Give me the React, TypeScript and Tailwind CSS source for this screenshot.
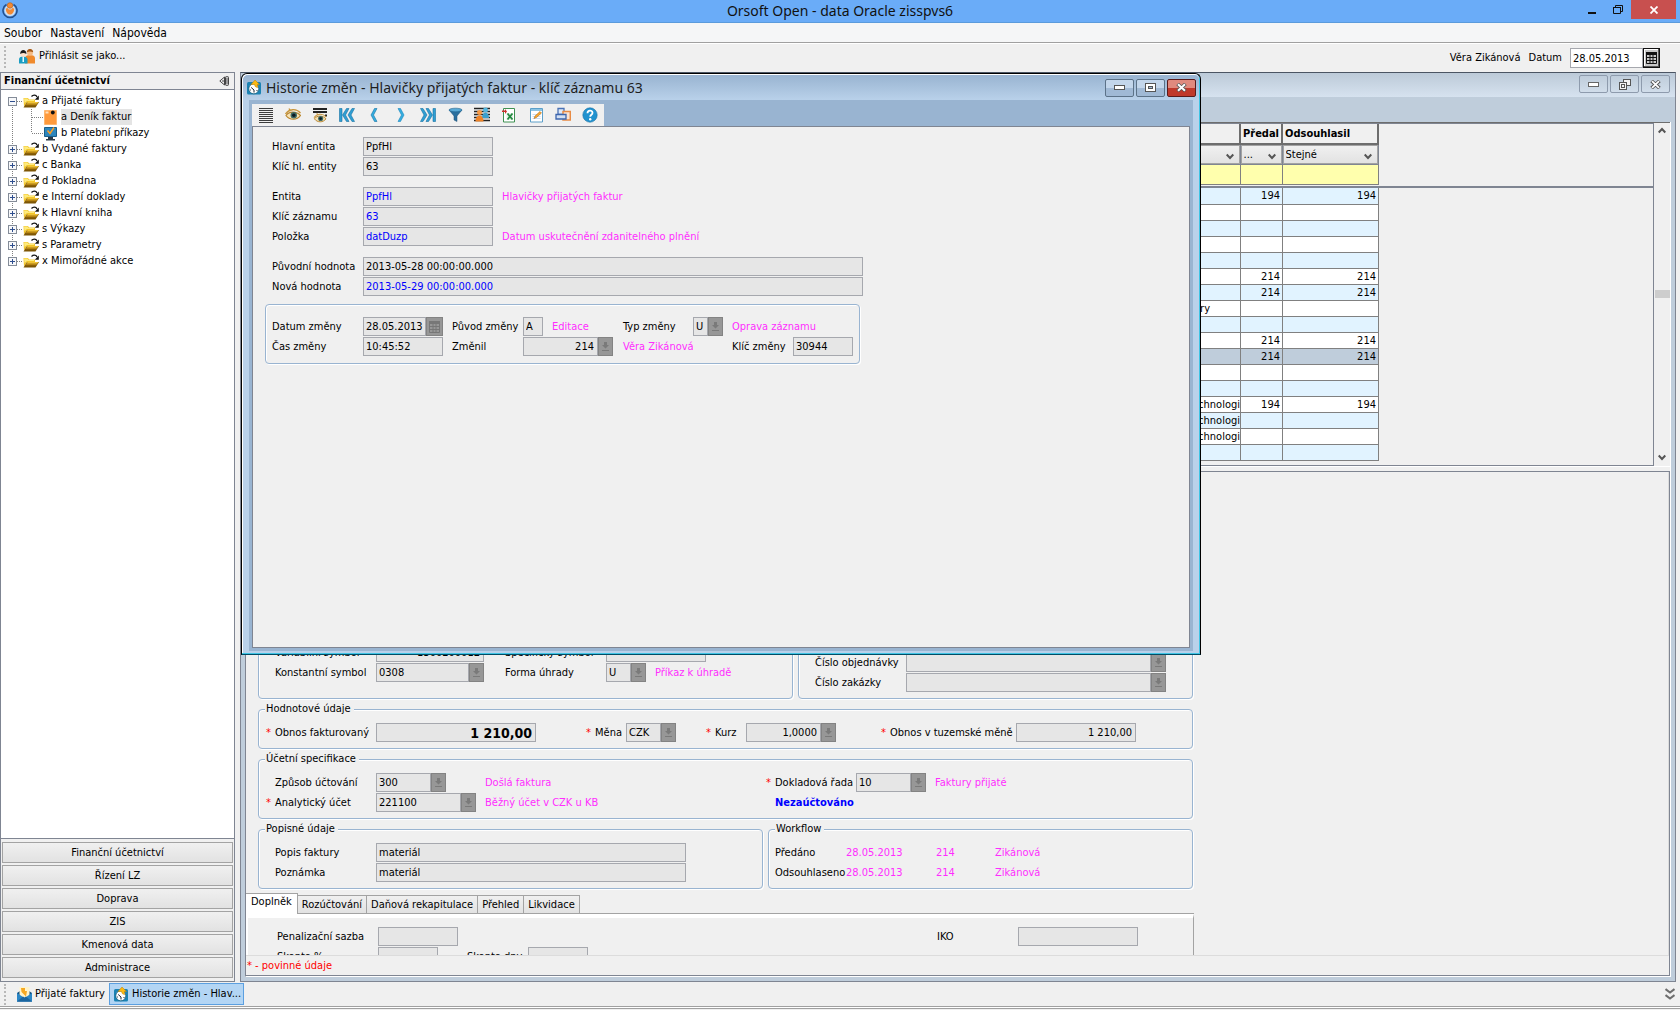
import React, { useId } from 'react';

// ---------- small building blocks ----------

const LookupButton = ({ label }: { label: string }) => (
  <button
    type="button"
    aria-label={`Vybrat: ${label}`}
    className="flex h-[19px] w-[15px] shrink-0 items-center justify-center border border-[#838383] bg-[#979797]"
  >
    <svg width="9" height="10" viewBox="0 0 9 10" fill="#7a7a7a">
      <path d="M3 0h3v3h2L4.5 6.5 1 3h2zM1 8h7v1H1z" />
    </svg>
  </button>
);

const CalendarButton = ({ label, active }: { label: string; active?: boolean }) => (
  <button
    type="button"
    aria-label={`Kalendář: ${label}`}
    className={
      active
        ? 'flex h-5 w-[17px] shrink-0 items-center justify-center border border-[#111] bg-[#c9c9c9] text-[#111] shadow-[inset_-1px_-1px_0_#555,inset_1px_1px_0_#fff]'
        : 'flex h-[19px] w-[17px] shrink-0 items-center justify-center border border-[#838383] bg-[#979797] text-[#777]'
    }
  >
    <svg width="11" height="12" viewBox="0 0 11 12" fill="none" stroke="currentColor">
      <path d="M0 1.5h11" strokeWidth="3" />
      <path d="M.5 3v8.500h10V3M.5 5.500h10M.5 8.500h10M4 3v8.500M7 3v8.500" />
    </svg>
  </button>
);

type FieldProps = {
  label: string;
  labelClass: string;
  inputClass: string;
  value?: string;
  blue?: boolean;
  right?: boolean;
  big?: boolean;
  required?: boolean;
  picker?: 'lookup' | 'calendar';
};

function Field({ label, labelClass, inputClass, value = '', blue, right, big, required, picker }: FieldProps) {
  const id = useId();
  return (
    <div className="flex h-5 shrink-0 items-start">
      <label htmlFor={id} className={`shrink-0 whitespace-nowrap leading-[19px] ${labelClass}`}>
        {required && <span className="inline-block w-[9px] text-[#ff0000]">*</span>}
        {label}
      </label>
      <input
        id={id}
        readOnly
        defaultValue={value}
        className={`h-[19px] shrink-0 border border-[#a6a8ae] bg-[#e6e6e6] outline-none ${inputClass} ${
          blue ? 'text-[#0000ff]' : 'text-black'
        } ${right ? 'pr-[3px] text-right' : 'pl-[2px]'} ${big ? 'text-[14px] font-bold' : ''}`}
      />
      {picker === 'lookup' && <LookupButton label={label} />}
      {picker === 'calendar' && <CalendarButton label={label} />}
    </div>
  );
}

const Note = ({ children, className = '' }: { children: React.ReactNode; className?: string }) => (
  <span className={`shrink-0 whitespace-nowrap leading-[19px] text-[#ff2dff] ${className}`}>{children}</span>
);

const Row = ({ children, className = '' }: { children: React.ReactNode; className?: string }) => (
  <div className={`flex h-5 items-start ${className}`}>{children}</div>
);

type GroupProps = { title?: string; className: string; bodyClass: string; children: React.ReactNode };

const Group = ({ title, className, bodyClass, children }: GroupProps) => (
  <fieldset
    className={`min-w-0 shrink-0 rounded-[4px] border border-[#99b4d1] shadow-[1px_1px_0_#fff,inset_1px_1px_0_#fff] ${className}`}
  >
    {title && <legend className="ml-[6px] bg-[#f0f0f0] pl-px pr-[3px] leading-[14px]">{title}</legend>}
    <div className={bodyClass}>{children}</div>
  </fieldset>
);

// ---------- icons ----------

const HistoryIcon = () => (
  <svg width="15" height="15" viewBox="0 0 15 15" className="shrink-0">
    <rect x="0" y="2" width="14" height="12.500" rx="1.500" fill="#1b83b4" />
    <circle cx="6.800" cy="8.800" r="5" fill="#fff" stroke="#0d5577" strokeWidth=".7" />
    <path d="M7 10 4.200 7.500M7 10V12.500M3.200 10h.8M9.500 10.500h1" stroke="#1b2733" />
    <path d="M8 0 12.500 4.500h-2v3.200L8.200 6.500 7.500 4.500H4z" fill="#fcb913" stroke="#b98107" strokeWidth=".5" />
  </svg>
);

const MailIcon = () => (
  <svg width="15" height="15" viewBox="0 0 15 15" className="shrink-0">
    <path d="M0 6 7.500 1 15 6v8.500H0z" fill="#14507f" />
    <path d="M2.500 0h10v9l-5 3-5-3z" fill="#fff3c9" />
    <path d="M4 1h4v3h2l-1 5.500L4.500 5z" fill="#f6a821" />
    <path d="M0 6l7.500 5L15 6v8.500H0z" fill="#2a86c6" />
    <path d="M0 14.500 6 9.500l1.500 1 1.500-1 6 5z" fill="#1a659f" />
  </svg>
);

const FolderIcon = () => (
  <svg width="16" height="14" viewBox="0 0 16 14" className="shrink-0">
    <path d="M.5 4h4.500l1 1.500h6V8H4L1 12.500z" fill="#f3c62a" />
    <path d="M1 4.500h3.500l1 1.500H11v1H4L1.500 9z" fill="#fdea7e" />
    <path d="M4 8h12l-3.500 5.500H.5z" fill="#7d5606" />
    <path d="M4.500 8H15.500l-1.300 1.800H3.500z" fill="#f0c338" />
    <path d="M3.500 9.800h10.700l-1 1.400H2.500z" fill="#b88511" />
    <path d="M8.500 2.500C10 .8 13 .6 14 3" fill="none" stroke="#111" strokeWidth="1.300" />
    <path d="M15.800 1.500v4.200h-4z" fill="#111" />
  </svg>
);

const NoteIcon = () => (
  <svg width="13" height="15" viewBox="0 0 13 15" className="shrink-0">
    <path d="M.5.5h12v14H.5z" fill="#ff9a3c" stroke="#ffb66e" />
    <path d="M1.500 1.500h3v2h-3z" fill="#ffe0bd" />
    <circle cx="8.800" cy="2.500" r="1.900" fill="#111" />
  </svg>
);

const MonitorIcon = () => (
  <svg width="13" height="15" viewBox="0 0 13 15" className="shrink-0">
    <path d="M.5 1.500h12v9H.5z" fill="#2d86bd" stroke="#1b5d88" />
    <path d="M4 11h5v2h2v1.500H2V13h2z" fill="#2a3a48" />
    <path d="M3.500 4.500 6 7.500 10 1.500" fill="none" stroke="#ffa024" strokeWidth="1.500" />
  </svg>
);

const PeopleIcon = () => (
  <svg width="16" height="15" viewBox="0 0 16 15" className="shrink-0">
    <path d="M6 14.500V9c0-2 2-3 5-3s5 1 5 3v5.500z" fill="#f08a2c" />
    <circle cx="11" cy="3.800" r="3" fill="#f5bb85" />
    <path d="M7.800 3.200c0-4.300 6.400-4.300 6.400 0-2-1-4.400-1-6.400 0z" fill="#a85a16" />
    <path d="M0 14.500V10.500c0-2 1.500-3 4-3s4.500 1 4.500 3v4z" fill="#1a9dc2" />
    <circle cx="4.300" cy="4.800" r="2.900" fill="#ffe3cb" />
    <path d="M1.200 5c-.3-5.200 6.500-5.200 6.200 0-2-1.500-4.200-1.500-6.200 0z" fill="#1c1c1c" />
    <path d="M3.500 8h1.500v5H3.500z" fill="#e8fbff" />
  </svg>
);

const Eye = ({ y = 0, s = 1 }: { y?: number; s?: number }) => (
  <g transform={`translate(${8 - 8 * s} ${y}) scale(${s})`}>
    <path d="M.5 7C4 2 11 1 15.500 6M5 3.500 4 1.500" fill="none" stroke="#c8963c" strokeWidth="1.300" />
    <path d="M1 8.500c3-4.500 10.500-4.500 14.500 0-3.500 5-11 5-14.500 0z" fill="#f6e2b4" stroke="#b9852d" strokeWidth="1.200" />
    <circle cx="8.800" cy="8.200" r="3.200" fill="#3f6a63" />
    <circle cx="8.800" cy="8.200" r="1.700" fill="#0b1a24" />
  </g>
);

const toolIcons: { name: string; icon: React.ReactNode }[] = [
  { name: 'Seznam', icon: <path d="M1 1.500h14M1 3.500h14M1 5.500h14M1 7.500h14M1 9.500h14M1 11.500h14M1 13.500h14M1 15.500h14" stroke="#3c3c3c" /> },
  { name: 'Zobrazit', icon: <Eye /> },
  {
    name: 'Zobrazit seznam',
    icon: (
      <>
        <path d="M1 2h14M1 5h14M13 8.500h2" stroke="#222" strokeWidth="2" />
        <Eye y={5} s={0.8} />
      </>
    ),
  },
  {
    name: 'První',
    icon: (
      <path d="M.5 1.500H3v13H.5zM7.500 1.500H10L6.500 8l3.500 6.500H7.500L3.500 8zM13 1.500h2.500L12 8l3.500 6.500H13L9 8z" fill="#2f9fd3" stroke="#1670a3" strokeWidth=".6" />
    ),
  },
  { name: 'Předchozí', icon: <path d="M8.500 1.500H11L7.500 8l3.500 6.500H8.500L5 8z" fill="#35aee0" stroke="#1670a3" strokeWidth=".6" /> },
  { name: 'Další', icon: <path d="M7.500 1.500H5L8.500 8 5 14.500h2.500L11 8z" fill="#35aee0" stroke="#1b86bd" strokeWidth=".6" /> },
  {
    name: 'Poslední',
    icon: (
      <path d="M15.500 1.500H13v13h2.500zM8.500 1.500H6L9.500 8 6 14.500h2.500L12.500 8zM3 1.500H.5L4 8 .5 14.500H3L7 8z" fill="#2f9fd3" stroke="#1670a3" strokeWidth=".6" />
    ),
  },
  {
    name: 'Filtr',
    icon: (
      <>
        <path d="M2 3h13L10 9v5.500L7 13V9z" fill="#2a6f9e" stroke="#1d4f74" strokeWidth=".5" />
        <ellipse cx="8.500" cy="3" rx="6.500" ry="1.800" fill="#58a9d6" stroke="#1d5f8c" strokeWidth=".6" />
      </>
    ),
  },
  {
    name: 'Uživatelé',
    icon: (
      <>
        <path d="M0 1.500h16M0 4.500h16M0 7.500h16M0 10.500h16M0 13.500h16" stroke="#222" strokeWidth="1.500" />
        <circle cx="11.500" cy="3" r="2.500" fill="#53b4dc" />
        <path d="M8 11c0-7 7-7 7 0z" fill="#3a9fcd" />
        <circle cx="5.500" cy="5.500" r="2.500" fill="#f79a45" />
        <path d="M1.500 14.500c0-8 8-8 8 0z" fill="#ef8327" />
      </>
    ),
  },
  {
    name: 'Export do Excelu',
    icon: (
      <>
        <path d="M2.500 1.500h11v13.500h-11z" fill="#fff" stroke="#3f9152" />
        <path d="M5.500 6h6.500v7H5.500z" fill="#e5f4e8" />
        <path d="M6.500 6.500l5 6M11.500 6.500l-5 6" stroke="#23893f" strokeWidth="1.800" />
        <path d="M1 3.500h3V2l2 2.500L4 7V5H1z" fill="#c9302c" />
      </>
    ),
  },
  {
    name: 'Poznámka',
    icon: (
      <>
        <path d="M2.500 1.500h12v13.500h-12z" fill="#fff" stroke="#5c9fc9" />
        <path d="M3 2h11v2H3z" fill="#8cc4e4" />
        <path d="M4.500 7.500h8M4.500 9.500h8M4.500 11.500h8" stroke="#cde" />
        <path d="M6 11.500 7 9l5-4.500 1.500 1.500-5 4.500z" fill="#f7a72e" stroke="#a55f10" strokeWidth=".5" />
      </>
    ),
  },
  {
    name: 'Okna',
    icon: (
      <>
        <path d="M3 1.500h6v6H3z" fill="#dfe9f7" stroke="#4a72b5" strokeWidth="1.300" />
        <path d="M8 4.500h7.300v8.500H8z" fill="#fbe3d2" stroke="#e88b45" strokeWidth="1.500" />
        <path d="M1 7.500h10v4.500H1z" fill="#d3e0f4" stroke="#3c65ad" strokeWidth="1.300" />
      </>
    ),
  },
  {
    name: 'Nápověda',
    icon: (
      <>
        <circle cx="8" cy="8" r="7.200" fill="#2192cf" stroke="#1871a5" strokeWidth=".6" />
        <path d="M5.500 6.300c0-3.500 5-3.500 5-.5 0 2-2.300 2-2.300 4" fill="none" stroke="#fff" strokeWidth="1.800" />
        <circle cx="8.200" cy="12.200" r="1.200" fill="#fff" />
      </>
    ),
  },
];

// ---------- sidebar ----------

const treeItems = [
  { label: 'a Přijaté faktury', open: true },
  { label: 'b Vydané faktury' },
  { label: 'c Banka' },
  { label: 'd Pokladna' },
  { label: 'e Interní doklady' },
  { label: 'k Hlavní kniha' },
  { label: 's Výkazy' },
  { label: 's Parametry' },
  { label: 'x Mimořádné akce' },
];

const Expander = ({ open, first, last }: { open?: boolean; first?: boolean; last?: boolean }) => (
  <svg width="22" height="16" viewBox="1 0 22 16" className="shrink-0">
    <path d={`M12.500 ${first ? 8 : 0}V${last ? 8 : 16}M13 8.500h10`} stroke="#808080" strokeDasharray="1 1" />
    <rect x="8.500" y="4.500" width="8" height="8" fill="#f7f8fa" stroke="#848c98" />
    <path d={open ? 'M10 8.500h5' : 'M10 8.500h5M12.500 6v5'} stroke="#2f4f8f" />
  </svg>
);

const ChildLine = ({ last }: { last?: boolean }) => (
  <svg width="43" height="16" viewBox="1 0 43 16" className="shrink-0">
    <path d={`M12.500 0V16M31.500 0V${last ? 8 : 16}M32 8.500h11`} stroke="#808080" strokeDasharray="1 1" />
  </svg>
);

function Sidebar() {
  return (
    <aside className="flex w-[235px] shrink-0 flex-col border border-[#7f8592]">
      <div className="flex h-[17px] items-center justify-between border-b border-[#7f8592] pl-[3px] pr-[5px]">
        <h2 className="font-bold">Finanční účetnictví</h2>
        <button type="button" aria-label="Skrýt panel">
          <svg width="10" height="10" viewBox="0 0 10 10" fill="none" stroke="#444">
            <path d="M5.500 1v8L.8 5zM5.500 5H3M8 1.500v7" />
            <rect x="6.500" y=".5" width="3" height="9" rx="1" />
          </svg>
        </button>
      </div>
      <ul className="flex-1 bg-white pt-[3px]">
        {treeItems.map((item, i) => (
          <li key={item.label}>
            <button type="button" className="flex h-4 items-center">
              <Expander open={item.open} first={i === 0} last={i === treeItems.length - 1} />
              <FolderIcon />
              <span className="pl-[3px]">{item.label}</span>
            </button>
            {item.open && (
              <ul>
                <li>
                  <button type="button" className="flex h-4 items-center">
                    <ChildLine />
                    <NoteIcon />
                    <span className="ml-1 bg-[#e4e4e4] pr-px leading-4">a Deník faktur</span>
                  </button>
                </li>
                <li>
                  <button type="button" className="flex h-4 items-center">
                    <ChildLine last />
                    <MonitorIcon />
                    <span className="ml-1 leading-4">b Platební příkazy</span>
                  </button>
                </li>
              </ul>
            )}
          </li>
        ))}
      </ul>
      <nav className="flex flex-col gap-[2px] border-t border-[#7f8592] px-px py-[3px]">
        {['Finanční účetnictví', 'Řízení LZ', 'Doprava', 'ZIS', 'Kmenová data', 'Administrace'].map((m) => (
          <button
            key={m}
            type="button"
            className="h-[21px] border border-[#a3a3a3] bg-gradient-to-b from-[#f0f0f0] to-[#e2e2e2]"
          >
            {m}
          </button>
        ))}
      </nav>
    </aside>
  );
}

// ---------- invoice table ----------

const rows: [string, string, string][] = [
  ['', '194', '194'],
  ['', '', ''],
  ['', '', ''],
  ['', '', ''],
  ['', '', ''],
  ['', '214', '214'],
  ['', '214', '214'],
  ['ry', '', ''],
  ['', '', ''],
  ['', '214', '214'],
  ['', '214', '214'],
  ['', '', ''],
  ['', '', ''],
  ['chnologi', '194', '194'],
  ['chnologi', '', ''],
  ['chnologi', '', ''],
  ['', '', ''],
];

const SELECTED = 10;

const Chevron = ({ up }: { up?: boolean }) => (
  <svg width="8" height="7" viewBox="0 0 8 7" fill="none" stroke="#555" strokeWidth="2">
    <path d={up ? 'M.7 5.500 4 2l3.300 3.500' : 'M.7 1.500 4 5l3.300-3.500'} />
  </svg>
);

const FilterSelect = ({ label, value }: { label: string; value: string }) => (
  <div className="relative">
    <select
      aria-label={label}
      className="block h-[19px] w-full appearance-none border border-[#a3a3a3] bg-gradient-to-b from-[#f0f0f0] to-[#e2e2e2] pl-[2px] outline-none"
    >
      <option>{value}</option>
    </select>
    <span className="pointer-events-none absolute bottom-1 right-[6px]">
      <Chevron />
    </span>
  </div>
);

function InvoiceTable() {
  return (
    <div className="flex h-[344px] shrink-0 border-t border-[#6d6d6d]">
      <div className="min-w-0 flex-1 overflow-hidden border-b border-r border-t border-[#7f8592]">
        <div className="h-[64px] border-b-2 border-[#7f8592]">
          <table className="w-[1133px] table-fixed border-collapse">
            <colgroup>
              <col />
              <col className="w-[42px]" />
              <col className="w-[96px]" />
            </colgroup>
            <thead>
              <tr className="h-5">
                {['', 'Předal', 'Odsouhlasil'].map((h) => (
                  <th key={h} scope="col" className="border-b-2 border-r-2 border-[#6d6d6d] p-0 pl-[2px] text-left font-bold">
                    {h}
                  </th>
                ))}
              </tr>
            </thead>
            <tbody>
              <tr className="h-5">
                <td className="border border-[#7f8592] p-0"><FilterSelect label="Filtr název" value="" /></td>
                <td className="border border-[#7f8592] p-0"><FilterSelect label="Filtr předal" value="..." /></td>
                <td className="border border-[#7f8592] p-0"><FilterSelect label="Filtr odsouhlasil" value="Stejné" /></td>
              </tr>
              <tr className="h-5 bg-[#ffffad]">
                <td className="border border-[#808080]" />
                <td className="border border-[#808080]" />
                <td className="border border-[#808080]" />
              </tr>
            </tbody>
          </table>
        </div>
        <table className="w-[1133px] table-fixed border-collapse">
          <colgroup>
            <col />
            <col className="w-[42px]" />
            <col className="w-[96px]" />
          </colgroup>
          <tbody>
            {rows.map((r, i) => (
              <tr
                key={i}
                className={i === SELECTED ? 'h-4 bg-[#bfcddb]' : i % 2 ? 'h-4 bg-white' : 'h-4 bg-[#e1f3ff]'}
              >
                {r.map((c, j) => (
                  <td
                    key={j}
                    className={`border-b border-r border-[#808080] p-0 text-right leading-[15px] ${
                      i === 7 ? 'pr-[30px]' : j === 0 ? '' : 'pr-[2px]'
                    }`}
                  >
                    {c}
                  </td>
                ))}
              </tr>
            ))}
          </tbody>
        </table>
      </div>
      <div className="flex w-4 shrink-0 flex-col items-center justify-between bg-[#f0f0f0] pb-[5px] pt-1">
        <button type="button" aria-label="Nahoru" className="flex"><Chevron up /></button>
        <div className="h-2 w-[15px] bg-[#cdcdcd]" />
        <button type="button" aria-label="Dolů" className="flex"><Chevron /></button>
      </div>
    </div>
  );
}

// ---------- invoice detail ----------

const tabs = ['Doplněk', 'Rozúčtování', 'Daňová rekapitulace', 'Přehled', 'Likvidace'];

function InvoiceDetail() {
  return (
    <div className="flex min-h-0 flex-1 flex-col border-b border-r border-t border-[#7f8592]">
      <div className="min-h-0 flex-1 overflow-hidden border-b border-r border-[#dcdcdc] pt-[149px]">
        <div className="flex w-[947px] flex-col gap-[3px] pl-3">
          <div className="flex gap-[5px]">
            <Group className="h-[78px] w-[535px]" bodyClass="pl-4 pt-[21px]">
              <Row>
                <Field label="Variabilní symbol" labelClass="w-[101px]" inputClass="w-[108px]" value="1300200012" right />
                <Field label="Specifický symbol" labelClass="ml-[21px] w-[101px]" inputClass="w-[100px]" />
              </Row>
              <Row>
                <Field label="Konstantní symbol" labelClass="w-[101px]" inputClass="w-[93px]" value="0308" picker="lookup" />
                <Field label="Forma úhrady" labelClass="ml-[21px] w-[101px]" inputClass="w-[25px]" value="U" picker="lookup" />
                <Note className="ml-[9px]">Příkaz k úhradě</Note>
              </Row>
            </Group>
            <Group className="h-[78px] flex-1" bodyClass="pl-4 pt-[31px]">
              <Field label="Číslo objednávky" labelClass="w-[91px]" inputClass="w-[245px]" picker="lookup" />
              <Field label="Číslo zakázky" labelClass="w-[91px]" inputClass="w-[245px]" picker="lookup" />
            </Group>
          </div>

          <Group title="Hodnotové údaje" className="h-[47px]" bodyClass="pl-[7px] pt-[7px]">
            <Row>
              <Field required label="Obnos fakturovaný" labelClass="w-[110px]" inputClass="w-[160px]" value="1 210,00" right big />
              <Field required label="Měna" labelClass="ml-[50px] w-[40px]" inputClass="w-[35px]" value="CZK" picker="lookup" />
              <Field required label="Kurz" labelClass="ml-[30px] w-[40px]" inputClass="w-[75px]" value="1,0000" right picker="lookup" />
              <Field required label="Obnos v tuzemské měně" labelClass="ml-[45px] w-[135px]" inputClass="w-[120px]" value="1 210,00" right />
            </Row>
          </Group>

          <Group title="Účetní specifikace" className="h-[67px]" bodyClass="flex pl-[7px] pt-[7px]">
            <div className="w-[500px]">
              <Row>
                <Field label="Způsob účtování" labelClass="w-[110px] pl-[9px]" inputClass="w-[55px]" value="300" picker="lookup" />
                <Note className="ml-[39px]">Došlá faktura</Note>
              </Row>
              <Row>
                <Field required label="Analytický účet" labelClass="w-[110px]" inputClass="w-[85px]" value="221100" picker="lookup" />
                <Note className="ml-[9px]">Běžný účet v CZK u KB</Note>
              </Row>
            </div>
            <div>
              <Row>
                <Field required label="Dokladová řada" labelClass="w-[90px]" inputClass="w-[55px]" value="10" picker="lookup" />
                <Note className="ml-[9px]">Faktury přijaté</Note>
              </Row>
              <Row>
                <strong className="pl-[9px] font-bold leading-[19px] text-[#0000ff]">Nezaúčtováno</strong>
              </Row>
            </div>
          </Group>

          <div className="flex gap-[5px]">
            <Group title="Popisné údaje" className="h-[67px] w-[505px]" bodyClass="pl-4 pt-[7px]">
              <Field label="Popis faktury" labelClass="w-[101px]" inputClass="w-[310px]" value="materiál" />
              <Field label="Poznámka" labelClass="w-[101px]" inputClass="w-[310px]" value="materiál" />
            </Group>
            <Group title="Workflow" className="h-[67px] flex-1" bodyClass="pl-[6px] pt-[7px]">
              {['Předáno', 'Odsouhlaseno'].map((w) => (
                <Row key={w}>
                  <span className="w-[71px] leading-[19px]">{w}</span>
                  <Note className="w-[90px]">28.05.2013</Note>
                  <Note className="w-[59px]">214</Note>
                  <Note>Zikánová</Note>
                </Row>
              ))}
            </Group>
          </div>
        </div>

        <div className="mt-1 w-[948px]">
          <div role="tablist" className="flex h-[21px] items-end border-b border-[#a3a3a3]">
            {tabs.map((t, i) => (
              <button
                key={t}
                type="button"
                role="tab"
                aria-selected={i === 0}
                className={
                  i === 0
                    ? '-mb-px h-[21px] border-r border-t border-[#a3a3a3] bg-white px-[5px] pb-1 leading-4'
                    : 'h-[18px] border-r border-t border-[#a3a3a3] bg-gradient-to-b from-[#f0f0f0] to-[#e2e2e2] px-1 leading-4'
                }
              >
                {t}
              </button>
            ))}
          </div>
          <div className="border-l-2 border-r border-t-4 border-white border-r-[#a3a3a3] pl-[29px] pt-[9px]">
            <Row>
              <Field label="Penalizační sazba" labelClass="w-[101px]" inputClass="w-[80px]" />
              <Field label="IKO" labelClass="ml-[479px] w-[81px]" inputClass="w-[120px]" />
            </Row>
            <Row>
              <Field label="Skonto %" labelClass="w-[101px]" inputClass="w-[60px]" />
              <Field label="Skonto dny" labelClass="ml-[29px] w-[61px]" inputClass="w-[60px]" />
            </Row>
          </div>
        </div>
      </div>
      <p className="h-[19px] pl-px leading-5 text-[#ff0000]">* - povinné údaje</p>
    </div>
  );
}

// ---------- history dialog ----------

function HistoryDialog() {
  return (
    <section
      role="dialog"
      aria-label="Historie změn"
      className="absolute left-px top-px flex h-[582px] w-[960px] flex-col rounded-t-[6px] border border-black border-b-[#004d66] bg-[#b9d1ea] shadow-[inset_-1px_-1px_0_#3fc4e4,inset_1px_1px_0_#fff]"
    >
      <header className="mx-px mt-px flex h-[25px] shrink-0 items-center rounded-t-[5px] bg-gradient-to-b from-[#99b4d1] to-[#b9d1ea] pl-1 pr-[3px]">
        <HistoryIcon />
        <h1 className="flex-1 pl-1 text-[14px] text-[#1e1e1e] [font-family:'Noto_Sans','Open_Sans',sans-serif]">
          Historie změn - Hlavičky přijatých faktur - klíč záznamu 63
        </h1>
        <div className="flex gap-[2px]">
          <button type="button" aria-label="Minimalizovat" className="flex h-[18px] w-[29px] items-center justify-center rounded-[2px] border border-[#5c7288] bg-gradient-to-b from-[#c3d6eb] from-50% to-[#a0b9d5] to-50%">
            <svg width="11" height="5"><rect x=".5" y=".5" width="10" height="4" fill="#fff" stroke="#555" /></svg>
          </button>
          <button type="button" aria-label="Maximalizovat" className="flex h-[18px] w-[29px] items-center justify-center rounded-[2px] border border-[#5c7288] bg-gradient-to-b from-[#c3d6eb] from-50% to-[#a0b9d5] to-50%">
            <svg width="11" height="9">
              <rect x=".5" y=".5" width="10" height="8" fill="#fff" stroke="#555" />
              <rect x="3.500" y="3.500" width="4" height="2" fill="#a3bcd8" stroke="#555" />
            </svg>
          </button>
          <button type="button" aria-label="Zavřít" className="flex h-[18px] w-[29px] items-center justify-center rounded-[2px] border border-[#5b1b1b] bg-gradient-to-b from-[#e08a7e] from-50% to-[#c0392b] to-50%">
            <svg width="11" height="9" viewBox="0 0 11 9"><path d="M1.500 1l8 7M9.500 1l-8 7" stroke="#555" strokeWidth="3.600" /><path d="M2 1.200l7 6.600M9 1.200l-7 6.600" stroke="#fff" strokeWidth="2" /></svg>
          </button>
        </div>
      </header>

      <div className="mx-[7px] mb-[3px] flex min-h-0 flex-1 flex-col bg-[#99b4d1] px-[3px] pb-[3px] pt-1">
        <div role="toolbar" aria-label="Nástroje" className="flex h-[22px] w-[352px] shrink-0 bg-[#f0f0f0]">
          {toolIcons.map((t) => (
            <button key={t.name} type="button" aria-label={t.name} className="flex w-[27px] items-center justify-center">
              <svg width="16" height="16" viewBox="0 0 16 16">{t.icon}</svg>
            </button>
          ))}
        </div>

        <div className="flex-1 border border-[#7f8592] bg-[#f0f0f0] pl-3 pt-[10px]">
          <div className="flex flex-col pl-[7px]">
            <Field label="Hlavní entita" labelClass="w-[91px]" inputClass="w-[130px]" value="PpfHl" />
            <Field label="Klíč hl. entity" labelClass="w-[91px]" inputClass="w-[130px]" value="63" />
            <Row className="mt-[10px]">
              <Field label="Entita" labelClass="w-[91px]" inputClass="w-[130px]" value="PpfHl" blue />
              <Note className="ml-[9px]">Hlavičky přijatých faktur</Note>
            </Row>
            <Field label="Klíč záznamu" labelClass="w-[91px]" inputClass="w-[130px]" value="63" blue />
            <Row>
              <Field label="Položka" labelClass="w-[91px]" inputClass="w-[130px]" value="datDuzp" blue />
              <Note className="ml-[9px]">Datum uskutečnění zdanitelného plnění</Note>
            </Row>
            <Row className="mt-[10px]">
              <Field label="Původní hodnota" labelClass="w-[91px]" inputClass="w-[500px]" value="2013-05-28 00:00:00.000" />
            </Row>
            <Field label="Nová hodnota" labelClass="w-[91px]" inputClass="w-[500px]" value="2013-05-29 00:00:00.000" blue />
          </div>

          <Group className="mt-[7px] h-[60px] w-[595px]" bodyClass="pl-[6px] pt-3">
            <Row>
              <Field label="Datum změny" labelClass="w-[91px]" inputClass="w-[63px]" value="28.05.2013" picker="calendar" />
              <Field label="Původ změny" labelClass="ml-[9px] w-[71px]" inputClass="w-5" value="A" />
              <Note className="ml-[9px] w-[71px]">Editace</Note>
              <Field label="Typ změny" labelClass="w-[70px]" inputClass="w-[15px]" value="U" picker="lookup" />
              <Note className="ml-[9px]">Oprava záznamu</Note>
            </Row>
            <Row>
              <Field label="Čas změny" labelClass="w-[91px]" inputClass="w-[80px]" value="10:45:52" />
              <Field label="Změnil" labelClass="ml-[9px] w-[71px]" inputClass="w-[75px]" value="214" right picker="lookup" />
              <Note className="ml-[10px] w-[109px]">Věra Zikánová</Note>
              <Field label="Klíč změny" labelClass="w-[61px]" inputClass="w-[60px]" value="30944" />
            </Row>
          </Group>
        </div>
      </div>
    </section>
  );
}

// ---------- background window ----------

const InnerWindowButtons = () => (
  <div className="flex gap-[2px]">
    <button type="button" aria-label="Minimalizovat okno" className="flex h-[18px] w-[29px] items-center justify-center rounded-[2px] border border-[#8e9bad]">
      <svg width="11" height="5"><rect x=".5" y=".5" width="10" height="4" fill="#fff" stroke="#666" /></svg>
    </button>
    <button type="button" aria-label="Obnovit okno" className="flex h-[18px] w-[29px] items-center justify-center rounded-[2px] border border-[#8e9bad]">
      <svg width="12" height="11" fill="#f4f4f4" stroke="#555"><rect x="4.500" y=".5" width="7" height="6" /><rect x=".5" y="3.500" width="7" height="7" /><rect x="2.500" y="5.500" width="3" height="3" /></svg>
    </button>
    <button type="button" aria-label="Zavřít okno" className="flex h-[18px] w-[29px] items-center justify-center rounded-[2px] border border-[#8e9bad]">
      <svg width="11" height="9" viewBox="0 0 11 9"><path d="M1.500 1l8 7M9.500 1l-8 7" stroke="#555" strokeWidth="3.600" /><path d="M2 1.200l7 6.600M9 1.200l-7 6.600" stroke="#fff" strokeWidth="1.800" /></svg>
    </button>
  </div>
);

function InvoiceWindow() {
  return (
    <section aria-label="Přijaté faktury" className="flex min-h-0 flex-1 flex-col border border-[#7f8592] border-t-[#4b5563] bg-[#bfcddb]">
      <header className="flex h-6 shrink-0 items-start justify-end bg-gradient-to-b from-[#bccad8] to-[#d6e2ef] pr-[5px] pt-[2px]">
        <InnerWindowButtons />
      </header>
      <div className="mx-1 mb-1 mt-[25px] flex min-h-0 flex-1 flex-col border-b border-l border-r border-white border-l-[#7f8592] bg-[#f0f0f0]">
        <InvoiceTable />
        <div className="h-[5px] shrink-0 border-t border-white" />
        <InvoiceDetail />
      </div>
    </section>
  );
}

// ---------- app ----------

export default function App() {
  return (
    <div className="flex h-screen min-h-[800px] flex-col overflow-hidden bg-[#f0f0f0] text-[11px] leading-[14px] text-black [font-family:'DejaVu_Sans_Condensed','Noto_Sans',sans-serif]">
      <header className="flex h-[23px] shrink-0 items-start border-b border-[#5b9bdc] bg-[#6aacf8]">
        <div className="flex w-[140px] pl-[2px] pt-[2px]">
          <svg width="17" height="17" viewBox="0 0 17 17" fill="none">
            <circle cx="8" cy="8.500" r="5.500" fill="#cfe0f3" />
            <path d="M4.500 2.500a7 7 0 1 0 7 0" stroke="#24518f" strokeWidth="1.600" />
            <path d="M3.800 6.500c0 8 8.400 8 8.400 0l-2-.5c0 2-4.400 2-4.400 0z" fill="#f28a35" />
            <circle cx="8" cy="3.500" r="2.800" fill="#f28a35" stroke="#b85a14" strokeWidth=".6" />
          </svg>
        </div>
        <h1 className="flex-1 text-center text-[14px] leading-[22px] text-[#111] [font-family:'Noto_Sans','Open_Sans',sans-serif]">
          Orsoft Open - data Oracle zisspvs6
        </h1>
        <div className="flex w-[140px] justify-end pr-1 text-[#111]">
          <button type="button" aria-label="Minimalizovat aplikaci" className="flex h-[19px] w-[26px] items-end justify-center pb-[5px]">
            <svg width="8" height="2"><path d="M0 0h8v2H0z" fill="#111" /></svg>
          </button>
          <button type="button" aria-label="Obnovit aplikaci" className="flex h-[19px] w-[26px] items-center justify-center">
            <svg width="10" height="9" fill="none" stroke="#111"><path d="M2.500 2V.5h7v6H8M0 2.500h8M.5 2v6.500h7V2" /></svg>
          </button>
          <button type="button" aria-label="Zavřít aplikaci" className="flex h-[19px] w-[45px] items-center justify-center bg-[#c8504f]">
            <svg width="8" height="8" stroke="#fff" strokeWidth="1.800"><path d="M.5.5l7 7M7.500.5l-7 7" /></svg>
          </button>
        </div>
      </header>

      <nav className="flex h-5 shrink-0 items-center gap-2 border-b border-[#a0a0a0] bg-[#f5f6f7] pl-1 text-[12px]">
        <button type="button">Soubor</button>
        <button type="button">Nastavení</button>
        <button type="button">Nápověda</button>
      </nav>

      <div className="flex h-[29px] shrink-0 items-start border-t border-white pl-1 pr-[20px]">
        <span className="mt-[2px] h-[22px] border-l-2 border-dotted border-[#b8b8b8]" />
        <button type="button" className="ml-[13px] flex h-[24px] items-center gap-1">
          <PeopleIcon />
          Přihlásit se jako...
        </button>
        <div className="ml-auto flex pt-1">
          <span className="mr-2 leading-5">Věra Zikánová</span>
          <label htmlFor="datum" className="mr-2 leading-5">Datum</label>
          <input id="datum" defaultValue="28.05.2013" className="h-5 w-[73px] border border-[#a6a8ae] bg-white pl-[2px] outline-none" />
          <CalendarButton label="Datum" active />
        </div>
      </div>

      <div className="flex min-h-0 flex-1 pr-1">
        <Sidebar />
        <main className="relative ml-[5px] flex min-w-0 flex-1 flex-col">
          <InvoiceWindow />
          <HistoryDialog />
        </main>
      </div>

      <footer className="flex h-6 shrink-0 items-start pl-1 pr-[5px] pt-px">
        <span className="mt-px h-[21px] border-l-2 border-dotted border-[#b8b8b8]" />
        <button type="button" className="ml-[11px] flex h-[22px] w-[92px] items-center gap-[3px] whitespace-nowrap">
          <MailIcon />
          Přijaté faktury
        </button>
        <button type="button" className="flex h-[22px] w-[135px] items-center gap-[3px] whitespace-nowrap border border-[#5b9fe0] bg-[#b3d5f4] pl-1">
          <HistoryIcon />
          Historie změn - Hlav...
        </button>
        <button type="button" aria-label="Další okna" className="ml-auto mt-[5px]">
          <svg width="10" height="12" viewBox="0 0 10 12" fill="none" stroke="#6d6d6d" strokeWidth="2">
            <path d="M.5 1 5 4.500 9.500 1M.5 7 5 10.500 9.500 7" />
          </svg>
        </button>
      </footer>
      <div className="h-[3px] shrink-0 border-y border-[#a0a0a0] bg-white" />
      <div className="h-px shrink-0" />
    </div>
  );
}
